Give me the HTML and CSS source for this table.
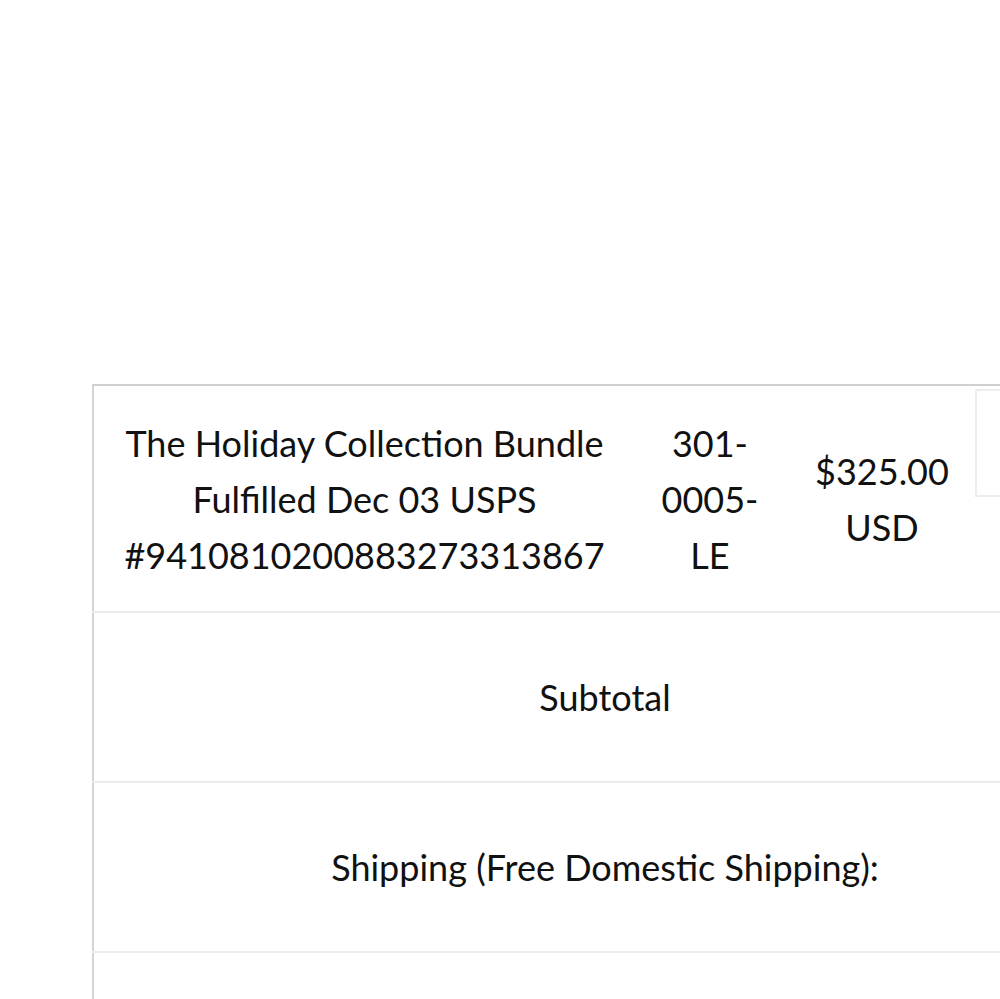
FILE: index.html
```html
<!DOCTYPE html>
<html lang="en">
<head>
    <meta charset="UTF-8">
    <meta name="viewport" content="width=device-width, initial-scale=1.0">
    <title>Order summary</title>
    <link rel="stylesheet" href="styles.css">
</head>
<body>
    <!-- Order items -->
    <table class="order">
        <tr class="item-row">
            <td class="item-name">The Holiday Collec&zwnj;tion Bundle<br>Fulfilled Dec 03 USPS<br>#9410810200883273313867</td>
            <td class="item-sku">301-<br>0005-<br>LE</td>
            <td class="item-price">$325.00<br>USD</td>
            <td class="item-qty"><div class="qty-box"></div></td>
        </tr>
        <tr class="total-row">
            <td colspan="4">Subtotal</td>
        </tr>
        <tr class="total-row">
            <td colspan="4">Shipping (Free Domes&zwnj;tic Shipping):</td>
        </tr>
        <tr class="total-row">
            <td colspan="4"></td>
        </tr>
    </table>
</body>
</html>
```

FILE: styles.css
```css
html, body { overflow: hidden; }
body { margin: 0; padding: 0; font-family: Lato, "Open Sans", sans-serif; color: #111; background: #fff; }
/* Table */
.order {
    margin: 384px 0 0 92px; width: 1024px;
    border-collapse: collapse;
    border-top: 2px solid #d0d0d0;
    border-left: 2px solid #d4d4d4;
    font-size: 36px; line-height: 56px;
    text-align: center;
}
.order td { border-bottom: 2px solid #ececec; vertical-align: middle; padding: 0; }
.item-row td { height: 222px; }
.item-name { width: 541px; }
.item-row .item-sku { width: 146px; padding-left: 2px; }
.item-row .item-price { width: 186px; padding-left: 6px; }
.item-row .item-qty { vertical-align: top; padding: 3px 0 0 0; }
.qty-box { height: 104px; border: 2px solid #ededed; border-right: none; }
.total-row td { height: 168px; }
```
